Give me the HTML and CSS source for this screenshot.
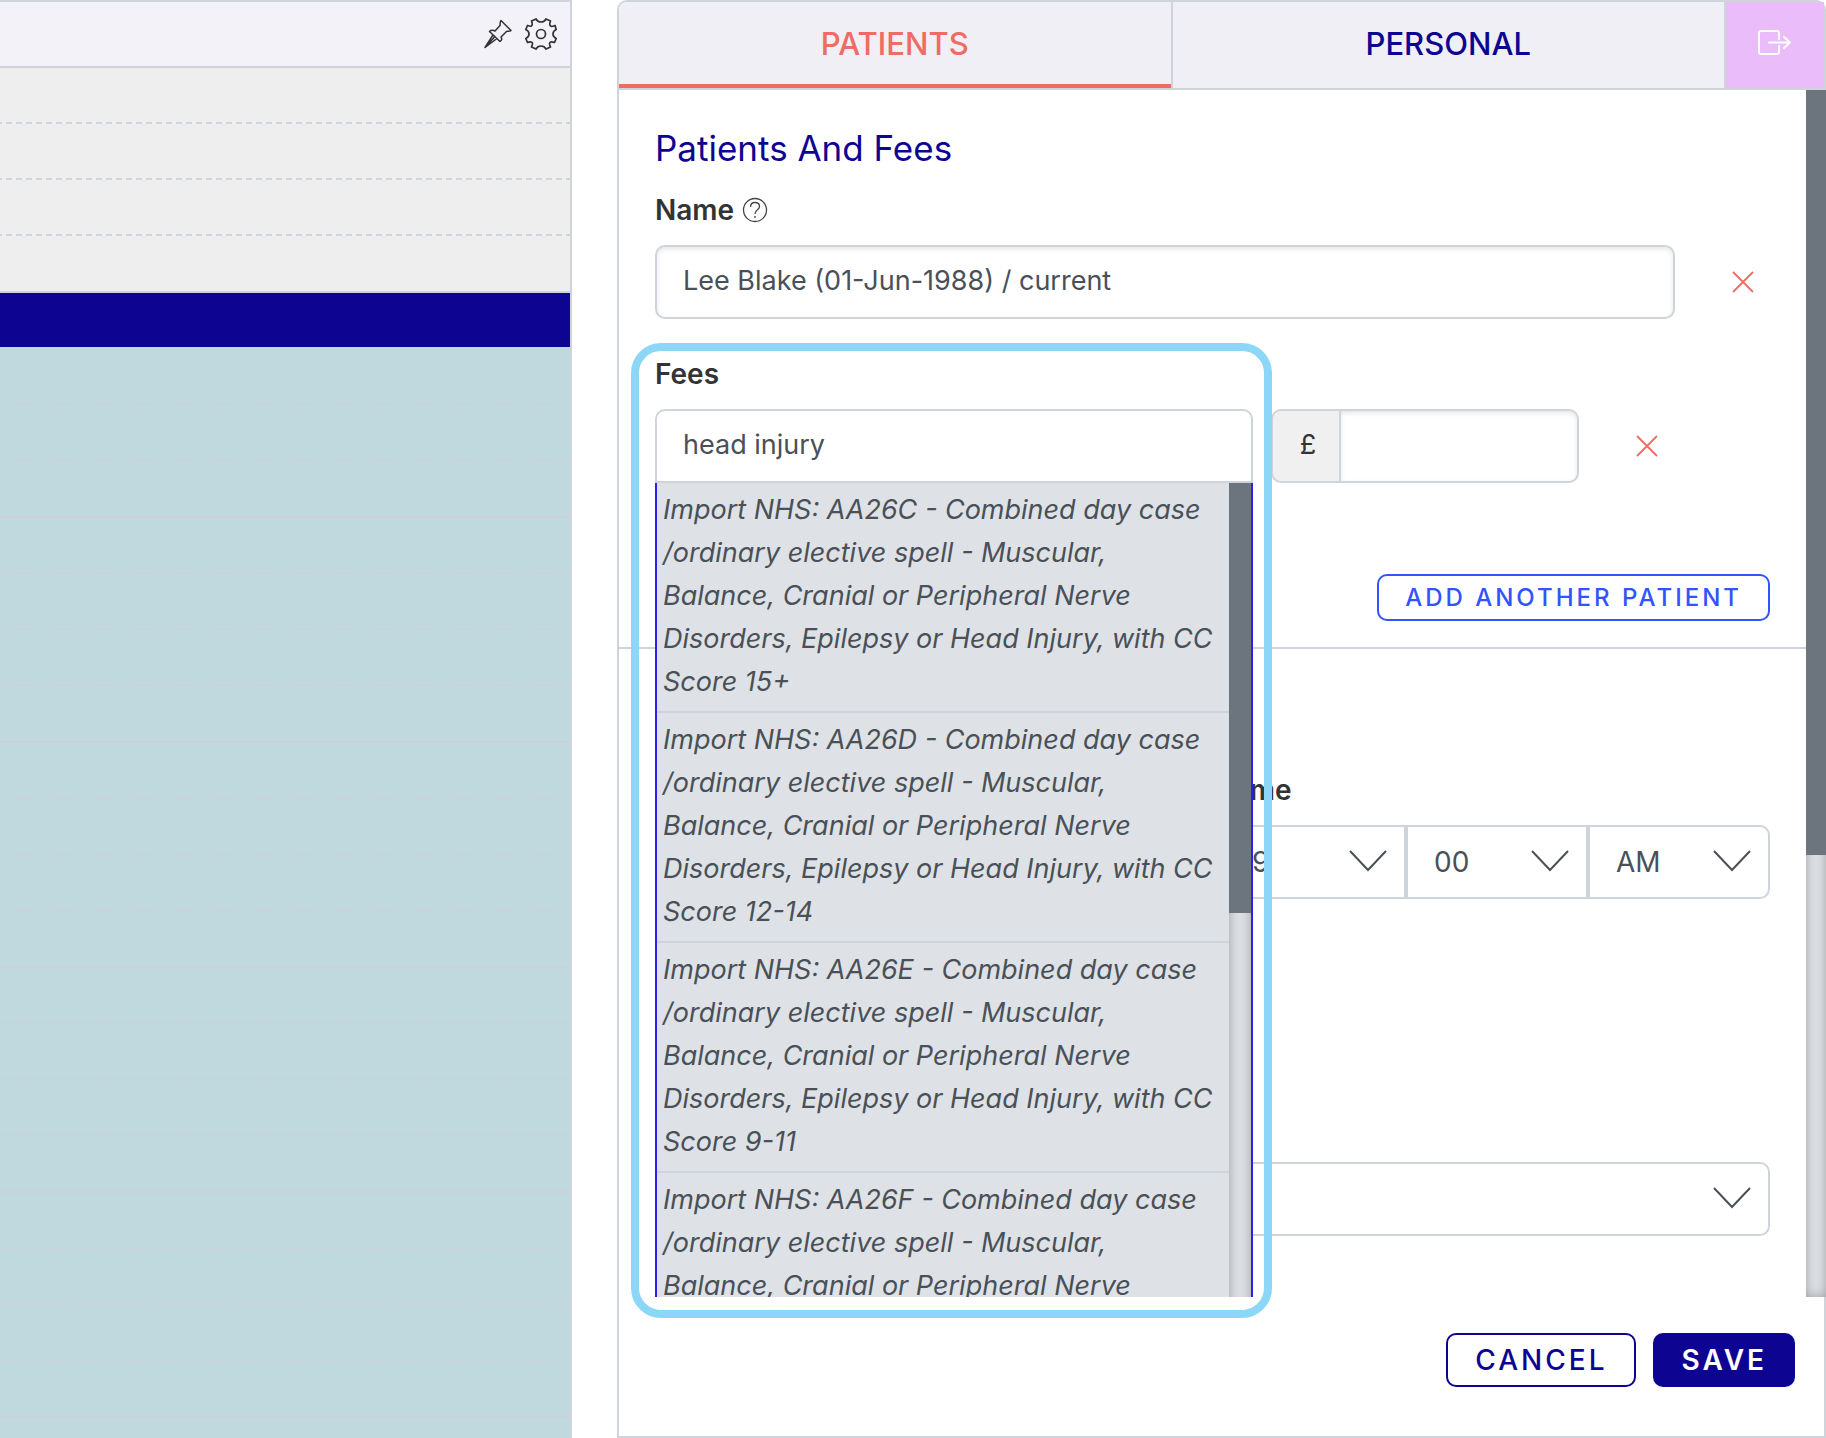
FILE: index.html
```html
<!DOCTYPE html>
<html lang="en">
<head>
    <meta charset="UTF-8">
    <meta name="viewport" content="width=device-width, initial-scale=1.0">
    <title>Patients And Fees</title>
    <link rel="stylesheet" href="styles.css">
</head>
<body>
    <div class="page">
        <section class="calendar">
            <header class="calendar-header">
                <button type="button" class="icon-button" aria-label="Pin">
                    <svg width="28" height="30" viewBox="0 0 28 30" fill="none" stroke="#333" stroke-width="1.5" stroke-linejoin="round"><path d="M17 1.500 27 11.500C25.500 13 23.500 12 22.500 12.500L17 18C18.500 20 17.500 21.500 16 22.500L5.500 12.500C7 11 9 11 11 12L16 6.500C16.500 5 15.500 3 17 1.500ZM9 16 1 28.500 13 19.500M1 28.500 11 17.500"/></svg>
                </button>
                <button type="button" class="icon-button" aria-label="Settings">
                    <svg width="32" height="32" viewBox="0 0 32 32" fill="none" stroke="#333" stroke-width="1.700" stroke-linejoin="round"><circle cx="16" cy="16" r="4.500"/><path d="M11 1C12.500 4 14.500 4 16 4S19.500 4 21 1L25.500 3C24 6.500 25 7.500 25.500 8C26 8.500 27.500 8.500 30 7.500L31.200 11.500C28 13 28 14.500 28 16S28 19 31.200 20.500L29.500 24.500C26.500 23.500 25.500 24 25 24.500S24 26 25.500 29L21 31C19.500 28 17.500 28 16 28S12.500 28 11 31L6.500 29C8 26 7.500 25 7 24.500S5 23.500 2.500 24.500L.800 20.500C4 19 4 17.500 4 16S4 13 .800 11.500L2.500 7.500C5 8.500 6 8.500 6.500 8S8 6.500 6.500 3Z"/></svg>
                </button>
            </header>
            <div class="slot"></div>
            <div class="slot"></div>
            <div class="slot"></div>
            <div class="slot slot-hour"></div>
            <div class="calendar-now"></div>
            <div class="calendar-booked">
                <div class="slot"></div>
                <div class="slot"></div>
                <div class="slot slot-hour"></div>
                <div class="slot"></div>
                <div class="slot"></div>
                <div class="slot"></div>
                <div class="slot slot-hour"></div>
                <div class="slot"></div>
                <div class="slot"></div>
                <div class="slot"></div>
                <div class="slot slot-hour"></div>
                <div class="slot"></div>
                <div class="slot"></div>
                <div class="slot"></div>
                <div class="slot slot-hour"></div>
                <div class="slot"></div>
                <div class="slot"></div>
                <div class="slot"></div>
                <div class="slot slot-hour"></div>
            </div>
        </section>

        <main class="panel">
            <nav class="tabs">
                <button type="button" class="tab tab-active">PATIENTS</button>
                <button type="button" class="tab">PERSONAL</button>
                <button type="button" class="tab-exit" aria-label="Close panel">
                    <svg width="34" height="26" viewBox="0 0 34 26" fill="none" stroke="#fff" stroke-width="2" stroke-linecap="round" stroke-linejoin="round"><path d="M21 9V3Q21 1 19 1H3Q1 1 1 3V22Q1 24 3 24H19Q21 24 21 22V16M11 12.500H32M26 7 32 12.500 26 18"/></svg>
                </button>
            </nav>

            <div class="panel-body">
                <form class="form" action="javascript:void(0)">
                    <div class="form-section">
                        <h1>Patients And Fees</h1>
                        <div class="label-row">
                            <label for="name">Name</label>
                            <svg width="26" height="26" viewBox="0 0 26 26" fill="none" stroke="#444" stroke-width="1.300"><circle cx="13" cy="13" r="11.500"/><path d="M8.500 10C8.500 7 10.500 5.500 13 5.500S17.500 7 17.500 9.500C17.500 13 13 12.500 13 17M13 19V21"/></svg>
                        </div>
                        <div class="row">
                            <input type="text" id="name" class="field field-inset" value="Lee Blake (01-Jun-1988) / current">
                            <button type="button" class="remove" aria-label="Remove patient">
                                <svg width="22" height="22" viewBox="0 0 22 22" fill="none" stroke="#ee6c64" stroke-width="1.800"><path d="M1 1 21 21M21 1 1 21"/></svg>
                            </button>
                        </div>

                        <div class="label-row fees-label">
                            <label for="fees">Fees</label>
                        </div>
                        <div class="row fees-row">
                            <div class="search">
                                <input type="text" id="fees" class="field field-open" value="head injury">
                                <div class="results">
                                    <ul class="results-list">
                                        <li>Import NHS: AA26C - Combined day case /ordinary elective spell - Muscular, Balance, Cranial or Peripheral Nerve Disorders, Epilepsy or Head Injury, with CC Score 15+</li>
                                        <li>Import NHS: AA26D - Combined day case /ordinary elective spell - Muscular, Balance, Cranial or Peripheral Nerve Disorders, Epilepsy or Head Injury, with CC Score 12-14</li>
                                        <li>Import NHS: AA26E - Combined day case /ordinary elective spell - Muscular, Balance, Cranial or Peripheral Nerve Disorders, Epilepsy or Head Injury, with CC Score 9-11</li>
                                        <li>Import NHS: AA26F - Combined day case /ordinary elective spell - Muscular, Balance, Cranial or Peripheral Nerve</li>
                                    </ul>
                                    <div class="rail"><div class="thumb thumb-results"></div></div>
                                </div>
                            </div>
                            <div class="amount">
                                <label for="amount" class="amount-sign">£</label>
                                <input type="text" id="amount" class="field field-inset">
                            </div>
                            <button type="button" class="remove" aria-label="Remove fee">
                                <svg width="22" height="22" viewBox="0 0 22 22" fill="none" stroke="#ee6c64" stroke-width="1.800"><path d="M1 1 21 21M21 1 1 21"/></svg>
                            </button>
                        </div>

                        <button type="button" class="button-add">ADD ANOTHER PATIENT</button>
                    </div>

                    <div class="form-section details">
                        <div class="time">
                            <div class="label-row">
                                <label for="hour">Time</label>
                            </div>
                            <div class="time-selects">
                                <div class="select">
                                    <select id="hour" class="field"><option>9</option></select>
                                    <svg class="chevron" width="38" height="22" viewBox="0 0 38 22" fill="none" stroke="#495057" stroke-width="2"><path d="M1 1 19 20 37 1"/></svg>
                                </div>
                                <div class="select">
                                    <select class="field" aria-label="Minutes"><option>00</option></select>
                                    <svg class="chevron" width="38" height="22" viewBox="0 0 38 22" fill="none" stroke="#495057" stroke-width="2"><path d="M1 1 19 20 37 1"/></svg>
                                </div>
                                <div class="select">
                                    <select class="field" aria-label="AM or PM"><option>AM</option></select>
                                    <svg class="chevron" width="38" height="22" viewBox="0 0 38 22" fill="none" stroke="#495057" stroke-width="2"><path d="M1 1 19 20 37 1"/></svg>
                                </div>
                            </div>
                        </div>
                        <div class="select select-wide">
                            <select class="field" aria-label="Appointment type"><option></option></select>
                            <svg class="chevron" width="38" height="22" viewBox="0 0 38 22" fill="none" stroke="#495057" stroke-width="2"><path d="M1 1 19 20 37 1"/></svg>
                        </div>
                    </div>
                </form>
                <div class="rail rail-panel"><div class="thumb thumb-panel"></div></div>
            </div>

            <footer class="panel-footer">
                <button type="button" class="button-cancel">CANCEL</button>
                <button type="button" class="button-save">SAVE</button>
            </footer>
            <div class="highlight"></div>
        </main>
    </div>
</body>
</html>
```

FILE: styles.css
```css
* {
    box-sizing: border-box;
}
body {
    margin: 0;
    background-color: #fff;
    color: #333;
    font-family: Inter, "Liberation Sans", sans-serif;
    font-size: 28px;
}
button,
input,
select {
    font-family: inherit;
    font-size: inherit;
    margin: 0;
}
button {
    cursor: pointer;
}
svg {
    display: block;
}
.page {
    display: grid;
    grid-template-columns: 572fr 1209fr;
    gap: 45px;
    height: 100vh;
}

/* calendar column */
.calendar {
    display: flex;
    flex-direction: column;
    min-height: 0;
    overflow: hidden;
    border-top: 2px solid #ced4da;
    border-right: 2px solid #ced4da;
    background-color: #eee;
}
.calendar-header {
    display: flex;
    flex: none;
    justify-content: flex-end;
    align-items: center;
    gap: 13px;
    height: 66px;
    padding-right: 13px;
    background-color: #f3f2f8;
    border-bottom: 2px solid #ced4da;
}
.icon-button {
    padding: 0;
    border: none;
    background: none;
}
.slot {
    flex: none;
    height: 56px;
    background: repeating-linear-gradient(to left, #ced4da 0 4px, transparent 4px 8px, #ced4da 8px 10px) bottom / 100% 2px no-repeat;
}
.slot-hour {
    height: 57px;
    background: none;
    border-bottom: 2px solid #ced4da;
}
.calendar-now {
    flex: none;
    height: 54px;
    background-color: #0d0592;
}
.calendar-booked {
    flex: 1;
    min-height: 0;
    padding-top: 2px;
    background-color: #bfd9de;
}
.calendar-booked .slot {
    background-image: repeating-linear-gradient(to left, #cbd1dc 0 4px, transparent 4px 8px, #cbd1dc 8px 10px);
}
.calendar-booked .slot-hour {
    background: none;
    border-bottom-color: #cbd1dc;
}

/* booking panel */
.panel {
    position: relative;
    display: flex;
    flex-direction: column;
    min-width: 0;
    border: 2px solid #ced4da;
    border-radius: 10px 10px 0 0;
}
.tabs {
    display: flex;
    height: 88px;
    border-bottom: 2px solid #ced4da;
}
.tab {
    flex: 1;
    padding: 0 0 4px;
    border: none;
    border-right: 2px solid #ced4da;
    background-color: #f0eff5;
    color: #0d0592;
    font-size: 31px;
    font-weight: 500;
}
.tab:first-child {
    border-top-left-radius: 8px;
}
.tab-active {
    color: #ee6c64;
    box-shadow: inset 0 -4px #ee6c64;
}
.tab-exit {
    display: flex;
    align-items: center;
    justify-content: center;
    width: 98px;
    padding: 0 0 4px;
    border: none;
    background-color: #ebbcfa;
}
.panel-body {
    display: flex;
    flex: 1;
    min-height: 0;
    margin-right: -2px;
    overflow: hidden;
}
.form {
    flex: 1;
}
.form-section {
    padding: 36px 36px 26px;
}
h1 {
    margin: 0 0 22px;
    color: #0d0592;
    font-size: 35px;
    font-weight: 400;
    line-height: 44px;
}
.label-row {
    display: flex;
    align-items: center;
    gap: 8px;
    margin-bottom: 17px;
    line-height: 36px;
    font-weight: 600;
}
.row {
    display: flex;
    align-items: center;
}
.field {
    width: 100%;
    height: 74px;
    padding: 0 26px;
    border: 2px solid #ced4da;
    border-radius: 10px;
    outline: none;
    background-color: #fff;
    color: #495057;
}
input.field {
    padding-bottom: 3px;
    font-size: 27px;
}
.field-inset {
    box-shadow: inset 0 2px 5px rgba(0, 0, 0, 0.1);
}
.remove {
    flex: none;
    width: 53px;
    margin-left: 42px;
    padding: 0 16px 0 15px;
    border: none;
    background: none;
}

/* fee search and its results */
.fees-label {
    margin-top: 37px;
}
.fees-row {
    margin-right: 96px;
}
.search {
    position: relative;
    flex: none;
    width: 598px;
    margin-right: 18px;
}
.field-open {
    display: block;
    border-radius: 10px 10px 0 0;
}
.results {
    position: absolute;
    top: 100%;
    left: 0;
    z-index: 2;
    display: flex;
    width: 100%;
    height: 980px;
    overflow: hidden;
    border: solid #2b1ff0;
    border-width: 0 2px;
    background-color: #dee2e6;
}
.results-list {
    flex: 1;
    margin: 0;
    padding: 0;
    list-style: none;
}
.results-list li {
    padding: 5px 7px 8px 6px;
    border-bottom: 2px solid #ced4da;
    color: #495057;
    font-size: 27px;
    font-style: italic;
    line-height: 43px;
}
.rail {
    flex: none;
    width: 22px;
    background-color: #dee2e6;
    box-shadow: inset 0 0 12px rgba(0, 0, 0, 0.3);
}
.rail-panel {
    width: 20px;
}
.thumb {
    background-color: #6c757d;
}
.thumb-results {
    height: 430px;
}
.thumb-panel {
    height: 765px;
}
.amount {
    display: flex;
    flex: 1;
    min-width: 0;
}
.amount-sign {
    display: flex;
    flex: none;
    align-items: center;
    justify-content: center;
    width: 68px;
    padding: 0 0 3px 4px;
    border: 2px solid #ced4da;
    border-right: none;
    border-radius: 10px 0 0 10px;
    background-color: #f0f0f0;
    font-size: 27px;
}
.amount .field {
    border-radius: 0 10px 10px 0;
}
.button-add {
    display: block;
    height: 47px;
    margin: 91px 0 0 auto;
    padding: 0 26px;
    border: 2px solid #3154ff;
    border-radius: 10px;
    background-color: #fff;
    color: #3154ff;
    font-size: 24px;
    font-weight: 500;
    letter-spacing: 3px;
}

/* appointment details */
.details {
    padding-top: 123px;
    border-top: 2px solid #ced4da;
}
.time {
    width: 546px;
    margin-left: auto;
}
.time-selects {
    display: flex;
}
.select {
    position: relative;
    flex: 1;
}
.select select {
    display: block;
    appearance: none;
}
.time-selects .field {
    border-radius: 0;
}
.time-selects .select:first-child .field {
    border-radius: 10px 0 0 10px;
}
.time-selects .select:last-child .field {
    border-radius: 0 10px 10px 0;
}
.chevron {
    position: absolute;
    top: 25px;
    right: 19px;
    pointer-events: none;
}
.select-wide {
    margin-top: 263px;
}

.panel-footer {
    display: flex;
    justify-content: flex-end;
    gap: 17px;
    height: 139px;
    padding: 36px 29px 49px;
}
.button-cancel,
.button-save {
    padding: 0 27px;
    border: 2px solid #0d0592;
    border-radius: 10px;
    background-color: #fff;
    color: #0d0592;
    font-weight: 500;
    letter-spacing: 3px;
}
.button-save {
    padding: 0 26px;
    background-color: #0d0592;
    color: #fff;
    font-weight: 600;
}

/* frame around the fee search */
.highlight {
    position: absolute;
    top: 341px;
    left: 12px;
    z-index: 3;
    width: 641px;
    height: 975px;
    border: 8px solid #8cd6f8;
    border-radius: 30px;
    pointer-events: none;
}
```
